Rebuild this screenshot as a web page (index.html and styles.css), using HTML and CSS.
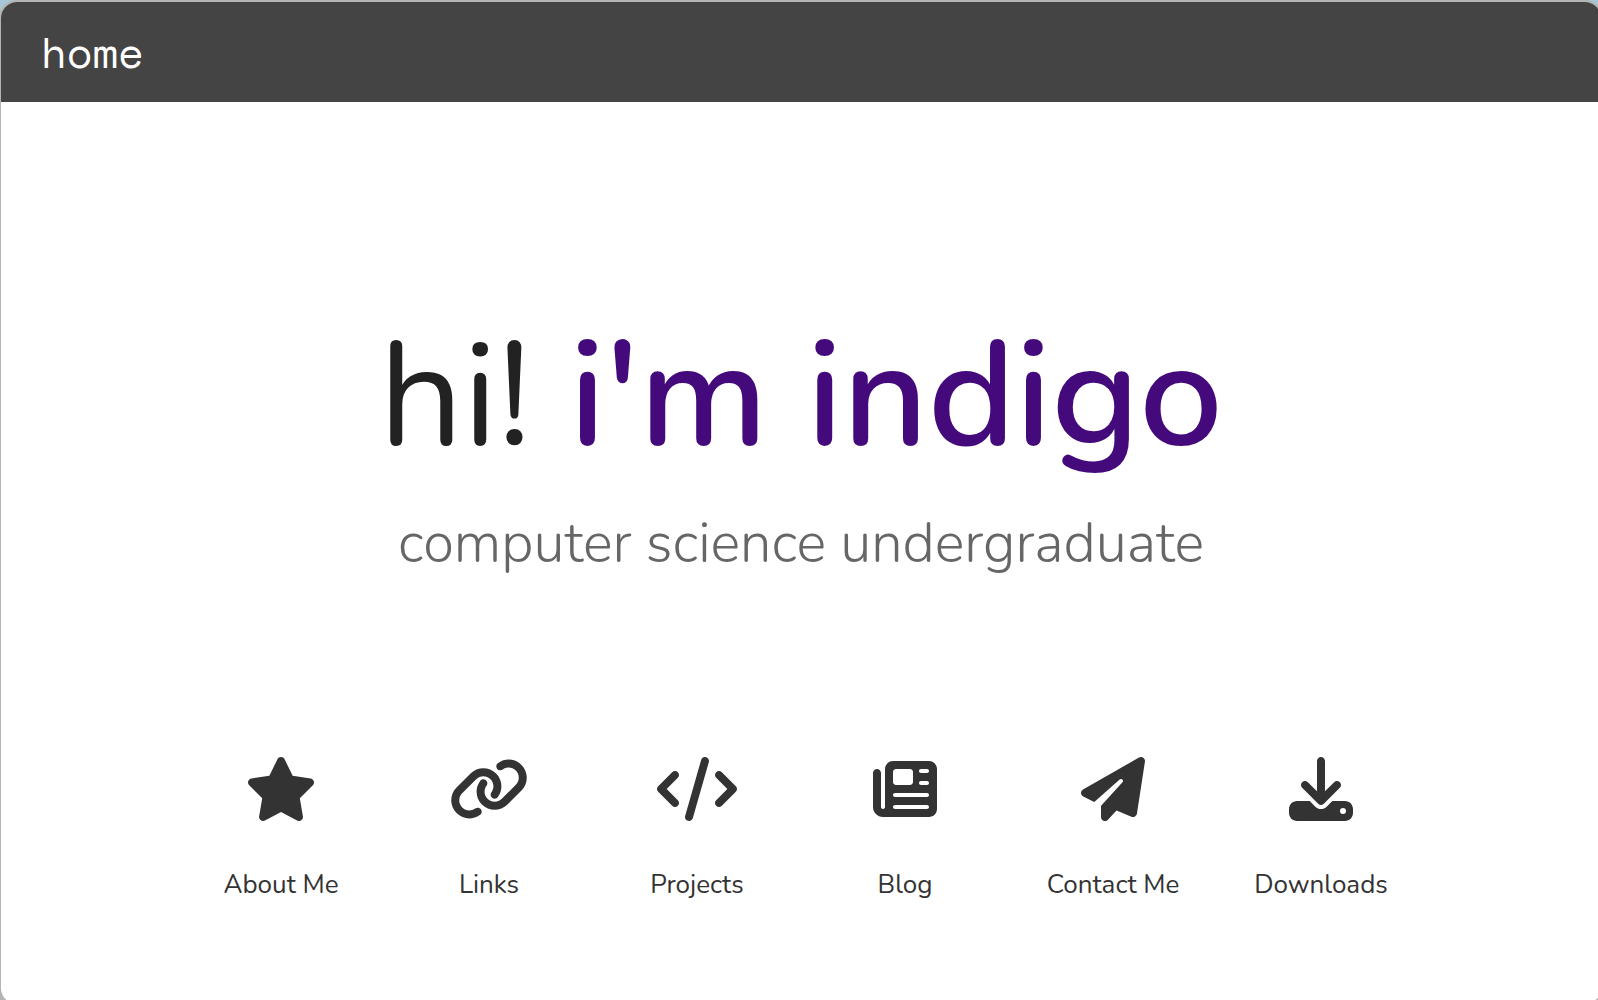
FILE: index.html
```
<!DOCTYPE html>
<html lang="en">

<head>
    <meta charset="UTF-8">
    <meta name="viewport" content="width=device-width, initial-scale=1.0">
    <title>home</title>
    <link rel="stylesheet" href="styles.css">
</head>

<body>
    <div class="window">
        <header class="topbar">
            <a href="#">home</a>
        </header>

        <main>
            <h1>hi! <span class="name">i'm indigo</span></h1>
            <p class="subtitle">computer science undergraduate</p>

            <nav class="links">
                <a href="#about">
                    <svg viewBox="0 0 576 512" width="72" height="64" aria-hidden="true"><path d="M316.9 18C311.6 7 300.4 0 288.1 0s-23.4 7-28.8 18L195 150.3 51.4 171.5c-12 1.8-22 10.2-25.7 21.7s-.7 24.2 7.9 32.7L137.8 329 113.2 474.7c-2 12 3 24.2 12.9 31.3s23 8 33.8 2.3l128.3-68.5 128.3 68.5c10.8 5.7 23.9 4.9 33.8-2.3s14.9-19.3 12.9-31.3L438.5 329 542.7 225.9c8.6-8.5 11.7-21.2 7.9-32.7s-13.7-19.9-25.7-21.7L381.2 150.3 316.9 18z"/></svg>
                    <span>About Me</span>
                </a>
                <a href="#links">
                    <svg viewBox="0 0 640 512" width="80" height="64" aria-hidden="true"><path d="M579.8 267.7c56.5-56.5 56.5-148 0-204.5c-50-50-128.8-56.5-186.3-15.4l-1.6 1.1c-14.4 10.3-17.7 30.3-7.4 44.6s30.3 17.7 44.6 7.4l1.6-1.1c32.1-22.9 76-19.3 103.8 8.6c31.5 31.5 31.5 82.5 0 114L422.3 334.8c-31.5 31.5-82.5 31.5-114 0c-27.9-27.9-31.5-71.8-8.6-103.8l1.1-1.6c10.3-14.4 6.9-34.4-7.4-44.6s-34.4-6.9-44.6 7.4l-1.1 1.6C206.5 251.2 213 330 263 380c56.5 56.5 148 56.5 204.5 0L579.8 267.7zM60.2 244.3c-56.5 56.5-56.5 148 0 204.5c50 50 128.8 56.5 186.3 15.4l1.6-1.1c14.4-10.3 17.7-30.3 7.4-44.6s-30.3-17.7-44.6-7.4l-1.6 1.1c-32.1 22.9-76 19.3-103.8-8.6C74 372 74 321 105.5 289.5L217.7 177.2c31.5-31.5 82.5-31.5 114 0c27.9 27.9 31.5 71.8 8.6 103.9l-1.1 1.6c-10.3 14.4-6.9 34.4 7.4 44.6s34.4 6.9 44.6-7.4l1.1-1.6C433.5 260.8 427 182 377 132c-56.5-56.5-148-56.5-204.5 0L60.2 244.3z"/></svg>
                    <span>Links</span>
                </a>
                <a href="#projects">
                    <svg viewBox="0 0 640 512" width="80" height="64" aria-hidden="true"><path d="M392.8 1.2c-17-4.9-34.7 5-39.6 22l-128 448c-4.9 17 5 34.7 22 39.6s34.7-5 39.6-22l128-448c4.9-17-5-34.7-22-39.6zm80.6 120.1c-12.5 12.5-12.5 32.8 0 45.3L562.7 256l-89.4 89.4c-12.5 12.5-12.5 32.8 0 45.3s32.8 12.5 45.3 0l112-112c12.5-12.5 12.5-32.8 0-45.3l-112-112c-12.5-12.5-32.8-12.5-45.3 0zm-306.7 0c-12.5-12.5-32.8-12.5-45.3 0l-112 112c-12.5 12.5-12.5 32.8 0 45.3l112 112c12.5 12.5 32.8 12.5 45.3 0s12.5-32.8 0-45.3L77.3 256l89.4-89.4c12.5-12.5 12.5-32.8 0-45.3z"/></svg>
                    <span>Projects</span>
                </a>
                <a href="#blog">
                    <svg viewBox="0 0 512 512" width="64" height="64" aria-hidden="true"><path d="M96 96c0-35.3 28.7-64 64-64H448c35.3 0 64 28.7 64 64V416c0 35.3-28.7 64-64 64H80c-44.2 0-80-35.8-80-80V128c0-17.7 14.3-32 32-32s32 14.3 32 32V400c0 8.8 7.2 16 16 16s16-7.2 16-16V96zm64 24v80c0 13.3 10.7 24 24 24H296c13.3 0 24-10.7 24-24V120c0-13.3-10.7-24-24-24H184c-13.3 0-24 10.7-24 24zm208-8c0 8.8 7.2 16 16 16h48c8.8 0 16-7.2 16-16s-7.2-16-16-16H384c-8.8 0-16 7.2-16 16zm0 96c0 8.8 7.2 16 16 16h48c8.8 0 16-7.2 16-16s-7.2-16-16-16H384c-8.8 0-16 7.2-16 16zM160 304c0 8.8 7.2 16 16 16H432c8.8 0 16-7.2 16-16s-7.2-16-16-16H176c-8.8 0-16 7.2-16 16zm0 96c0 8.8 7.2 16 16 16H432c8.8 0 16-7.2 16-16s-7.2-16-16-16H176c-8.8 0-16 7.2-16 16z"/></svg>
                    <span>Blog</span>
                </a>
                <a href="#contact">
                    <svg viewBox="0 0 512 512" width="64" height="64" aria-hidden="true"><path d="M498.1 5.6c10.1 7 15.4 19.1 13.5 31.2l-64 416c-1.5 9.7-7.4 18.2-16 23s-18.9 5.4-28 1.6L284 427.7l-68.5 74.1c-8.9 9.7-22.9 12.9-35.2 8.1S160 493.2 160 480V396.4c0-4 1.5-7.8 4.2-10.7L331.8 202.8c5.8-6.3 5.6-16-.4-22s-15.7-6.4-22-.7L106 360.8 17.7 316.6C7.1 311.3 .3 300.7 0 288.9s5.9-22.8 16.1-28.7l448-256c10.7-6.1 23.9-5.5 34 1.4z"/></svg>
                    <span>Contact Me</span>
                </a>
                <a href="#downloads">
                    <svg viewBox="0 0 512 512" width="64" height="64" aria-hidden="true"><path d="M288 32c0-17.7-14.3-32-32-32s-32 14.3-32 32V274.7l-73.4-73.4c-12.5-12.5-32.8-12.5-45.3 0s-12.5 32.8 0 45.3l128 128c12.5 12.5 32.8 12.5 45.3 0l128-128c12.5-12.5 12.5-32.8 0-45.3s-32.8-12.5-45.3 0L288 274.7V32zM64 352c-35.3 0-64 28.7-64 64v32c0 35.3 28.7 64 64 64H448c35.3 0 64-28.7 64-64V416c0-35.3-28.7-64-64-64H346.5l-45.3 45.3c-25 25-65.5 25-90.5 0L165.5 352H64zm368 56a24 24 0 1 1 0 48 24 24 0 1 1 0-48z"/></svg>
                    <span>Downloads</span>
                </a>
            </nav>
        </main>
    </div>
</body>
</html>
```

FILE: styles.css
```
* {
    margin: 0;
    padding: 0;
    box-sizing: border-box;
}

body {
    font-family: Nunito, Lato, sans-serif;
    background: linear-gradient(#a5c8d8, #b4b4b4 40px);
    height: 100vh;
    overflow: hidden;
}

.window {
    display: flex;
    flex-direction: column;
    min-height: calc(100vh + 2px);
    margin: 2px -3px 0 1px;
    background-color: white;
    border-radius: 16px;
    box-shadow: 0 0 0 2px #b4b4b4;
    overflow: hidden;
}

.topbar {
    display: flex;
    align-items: center;
    height: 100px;
    padding: 0 40px;
    background-color: #444;
}

.topbar a {
    font-family: "Space Mono", "Liberation Mono", monospace;
    font-size: 42px;
    color: white;
    text-decoration: none;
}

main {
    flex: 1;
    display: flex;
    flex-direction: column;
    align-items: center;
    padding-top: 196px;
}

h1 {
    font-size: 148px;
    font-weight: 400;
    line-height: 196px;
    color: #222;
}

.name {
    font-weight: 600;
    color: #440a7c;
}

.subtitle {
    margin-top: 12px;
    font-size: 56px;
    font-weight: 300;
    line-height: 76px;
    color: #666;
}

.links {
    display: grid;
    grid-template-columns: repeat(6, 208px);
    margin-top: 175px;
}

.links a {
    display: flex;
    flex-direction: column;
    align-items: center;
    gap: 44px;
    font-size: 26px;
    line-height: 40px;
    color: #333;
    text-decoration: none;
}

.links svg {
    fill: #333;
}
```
